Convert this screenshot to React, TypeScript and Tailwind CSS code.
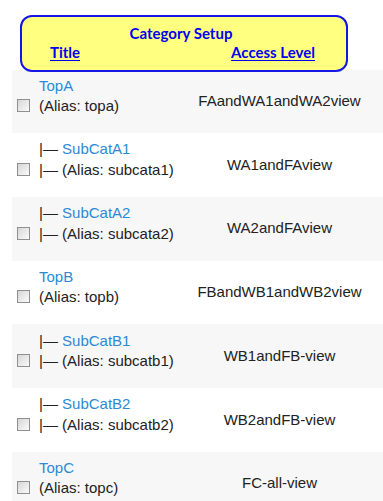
import React from "react";

type Row = { title: string; alias: string; access: string; sub: boolean };

const rows: Row[] = [
  { title: "TopA", alias: "topa", access: "FAandWA1andWA2view", sub: false },
  { title: "SubCatA1", alias: "subcata1", access: "WA1andFAview", sub: true },
  { title: "SubCatA2", alias: "subcata2", access: "WA2andFAview", sub: true },
  { title: "TopB", alias: "topb", access: "FBandWB1andWB2view", sub: false },
  { title: "SubCatB1", alias: "subcatb1", access: "WB1andFB-view", sub: true },
  { title: "SubCatB2", alias: "subcatb2", access: "WB2andFB-view", sub: true },
  { title: "TopC", alias: "topc", access: "FC-all-view", sub: false },
];

function Check() {
  return (
    <div className="w-[13px] h-[13px] border border-[#8f8f8f] bg-gradient-to-br from-[#d6d6d6] to-[#fbfbfb] shrink-0" />
  );
}

export default function App() {
  return (
    <div className="w-[383px] h-[501px] overflow-hidden bg-white font-['Liberation_Sans',Arial,sans-serif]">
      <div className="pt-[15px] pl-[20px] relative z-10">
        <div className="w-[328px] h-[57px] border-2 border-[#1515e8] rounded-[12px] bg-[#ffff80] font-['Lato',sans-serif] font-bold text-[15px] leading-[18px] text-[#0000f0] pt-[7px]">
          <div className="text-center pr-[6px]">Category Setup</div>
          <div className="flex mt-[1px] pl-[28px] pr-[31px]">
            <span className="underline underline-offset-2 decoration-1">Title</span>
            <span className="ml-auto underline underline-offset-2 decoration-1">Access Level</span>
          </div>
        </div>
      </div>
      <div className="-mt-[2.5px] pl-[12px]">
        {rows.map((r, i) => (
          <div
            key={i}
            className={`flex h-[63.7px] text-[15px] leading-[20.5px] text-[#222222] ${i % 2 === 0 ? "bg-[#f7f7f7]" : "bg-white"}`}
          >
            <div className="w-[164px] flex items-start pt-[6.3px] pl-[5px]">
              <div className="mt-[23.5px] mr-[9px]">
                <Check />
              </div>
              <div className="whitespace-nowrap">
                <div>
                  {r.sub && <span>|— </span>}
                  <span className="text-[#2a8bd4]">{r.title}</span>
                </div>
                <div>
                  {r.sub && <span>|— </span>}
                  (Alias: {r.alias})
                </div>
              </div>
            </div>
            <div className="flex-1 flex items-center justify-center whitespace-nowrap">
              {r.access}
            </div>
          </div>
        ))}
      </div>
    </div>
  );
}
